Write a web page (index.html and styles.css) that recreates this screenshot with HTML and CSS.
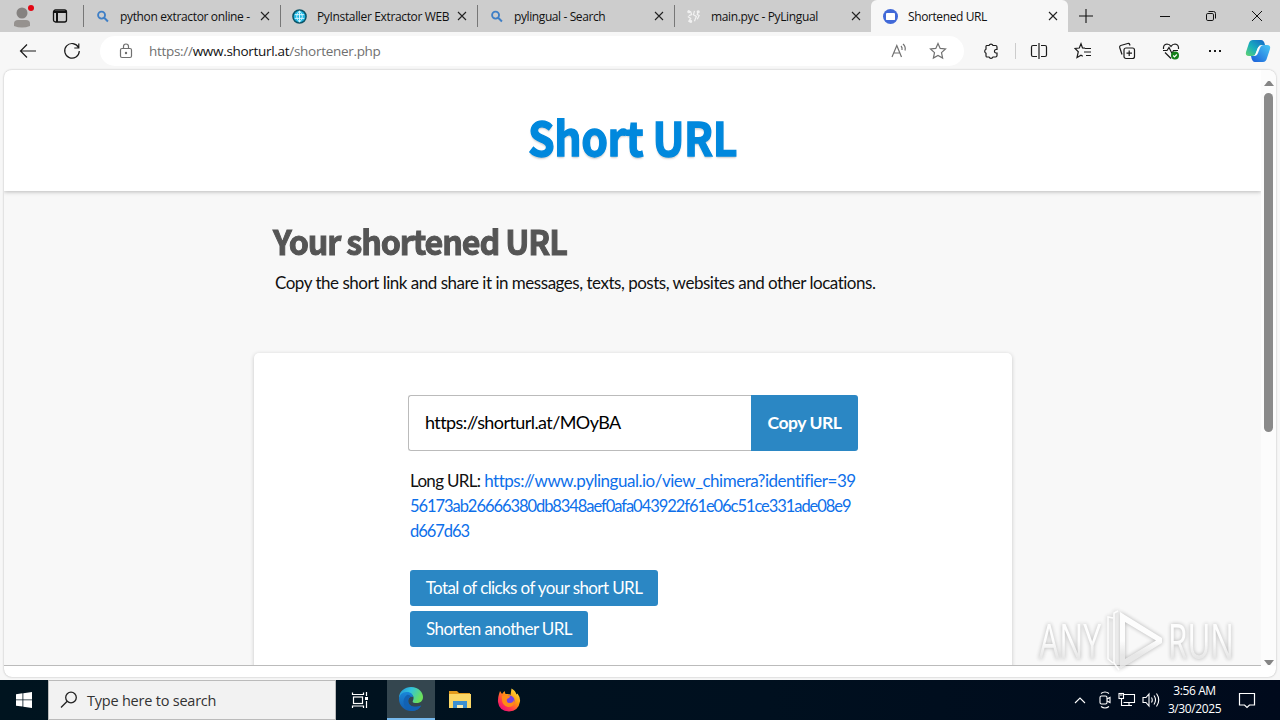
FILE: index.html
```html
<!DOCTYPE html>
<html lang="en">
<head>
  <meta charset="utf-8">
  <title>Shortened URL</title>
  <link rel="stylesheet" href="styles.css">
</head>
<body>
  <div class="desktop">
    <div class="tab-bar">
      <div class="profile">
        <svg width="26" height="28" viewBox="0 0 26 28"><circle cx="12" cy="11" r="5.5" fill="#858280"/><path d="M4 24v-2.500q0-3.500 4-3.500h8q4 0 4 3.500V24q-8 3-16 0z" fill="#96928f"/><circle cx="21" cy="6" r="3" fill="#e30613"/></svg>
      </div>
      <div class="tab-actions">
        <svg width="16" height="16" viewBox="0 0 16 16" fill="none" stroke="#111" stroke-width="1.3"><rect x="1.5" y="2" width="13" height="12" rx="2"/><path d="M1.5 4h13M5 4v10" stroke-width="2"/></svg>
      </div>
      <div class="tab">
        <svg class="favicon" viewBox="0 0 16 16" fill="none" stroke="#3f7fc6" stroke-width="2"><circle cx="7" cy="6.5" r="3.7"/><path d="M9.8 9.3l4 4"/></svg>
        <span class="tab-title t1">python extractor online -</span>
        <svg class="close" viewBox="0 0 10 10"><path d="M1 1l8 8M9 1L1 9"/></svg>
      </div>
      <div class="tab">
        <svg class="favicon" viewBox="0 0 16 16" fill="none"><circle cx="8" cy="8" r="7" fill="#20b7e2" stroke="#0b5367" stroke-width="1.6"/><path d="M3 6h10M3 10h10M8 2v12M8 2q-6 6 0 12M8 2q6 6 0 12" stroke="#d9f6ff"/></svg>
        <span class="tab-title t2">PyInstaller Extractor WEB</span>
        <svg class="close" viewBox="0 0 10 10"><path d="M1 1l8 8M9 1L1 9"/></svg>
      </div>
      <div class="tab">
        <svg class="favicon" viewBox="0 0 16 16" fill="none" stroke="#3f7fc6" stroke-width="2"><circle cx="7" cy="6.5" r="3.7"/><path d="M9.8 9.3l4 4"/></svg>
        <span class="tab-title t3">pylingual - Search</span>
        <svg class="close" viewBox="0 0 10 10"><path d="M1 1l8 8M9 1L1 9"/></svg>
      </div>
      <div class="tab">
        <svg class="favicon" viewBox="0 0 16 16" fill="none" stroke="#f2f2f2" stroke-width="1.3"><path d="M2 2l3 1 1 3-3 1M2 8l3 2-2 3 3 1M9 2l-1 4 3 2-2 5M13 2l-1 4 2 1-2 4"/><circle cx="3" cy="3" r="1"/><circle cx="13" cy="3" r="1"/><circle cx="5" cy="13" r="1"/></svg>
        <span class="tab-title t4">main.pyc - PyLingual</span>
        <svg class="close" viewBox="0 0 10 10"><path d="M1 1l8 8M9 1L1 9"/></svg>
      </div>
      <div class="tab active">
        <svg class="favicon" viewBox="0 0 16 16"><circle cx="8" cy="8" r="8" fill="#4169d8"/><rect x="3.2" y="4.2" width="9.6" height="7.6" rx="1" fill="#fff"/></svg>
        <span class="tab-title t5">Shortened URL</span>
        <svg class="close" viewBox="0 0 10 10"><path d="M1 1l8 8M9 1L1 9"/></svg>
      </div>
      <div class="new-tab">
        <svg width="14" height="14" viewBox="0 0 14 14" stroke="#111" stroke-width="1.1"><path d="M7 0v14M0 7h14"/></svg>
      </div>
      <div class="window-controls">
        <svg width="10" height="10" viewBox="0 0 10 10"><path d="M0 5.5h10"/></svg>
        <svg width="10" height="10" viewBox="0 0 10 10"><rect x=".5" y="2.5" width="7" height="7" rx="1.3"/><path d="M2.5 .5h5q2 0 2 2v5"/></svg>
        <svg width="10" height="10" viewBox="0 0 10 10"><path d="M0 0l10 10M10 0L0 10"/></svg>
      </div>
    </div>

    <div class="toolbar">
      <svg class="back" width="18" height="16" viewBox="0 0 18 16"><path d="M17 8H1.500M8 1.500L1.500 8L8 14.500"/></svg>
      <svg class="reload" width="18" height="18" viewBox="0 0 18 18"><path d="M15.500 5.500A7.300 7.300 0 1 0 16.300 9M15.800 1.500V6h-4.500"/></svg>
      <div class="address">
        <svg class="lock" width="14" height="16" viewBox="0 0 14 16"><rect x="1.500" y="5.500" width="11" height="9" rx="1.500"/><path d="M4.500 5.500V3.500a2.500 2.500 0 0 1 5 0v2"/><circle cx="7" cy="10" r=".6"/></svg>
        <span class="url">https://<b>www.shorturl.at</b>/shortener.php</span>
        <svg class="read" width="16" height="16" viewBox="0 0 16 16"><path d="M1 14L5.800 2.500L10.500 14M2.700 10h6.200M10 3q1.500 1.500 1 4M12 1q3 2.500 2 6.500"/></svg>
        <svg class="fav" width="18" height="18" viewBox="0 0 18 18"><path d="M9 1.500l2.200 4.900 5.300.6-4 3.600 1.100 5.400L9 13.400 4.400 16l1.100-5.400-4-3.600 5.300-.6z"/></svg>
      </div>
      <div class="tools">
        <svg width="18" height="18" viewBox="0 0 18 18"><path d="M4.500 3.500H7a2.200 2.200 0 0 1 4 0h2.500q1.500 0 1.500 1.500v2.500h-1.200a1.800 1.800 0 0 0 0 3.500H15v2.500q0 1.500-1.500 1.500H11a2.200 2.200 0 0 1-4 0H4.500Q4 15 4 13.500V11.200a2.200 2.200 0 0 1 0-4V4.500q0-1 .5-1z"/></svg>
        <span class="divider"></span>
        <svg width="18" height="18" viewBox="0 0 18 18"><path d="M7 3.500H3q-1.500 0-1.500 1.500v8q0 1.500 1.500 1.500h4M11 3.500h4q1.500 0 1.500 1.500v8q0 1.500-1.500 1.500h-4M9 1v16"/></svg>
        <svg width="18" height="18" viewBox="0 0 18 18"><path d="M11 6.200L8.500 6 7 1.800 5.300 6 1 6.500l3.300 3.200L3 15.500l4-2.300 1.800 1M11 6.500h6M10 10h7M12 13.500h5"/></svg>
        <svg width="18" height="18" viewBox="0 0 18 18"><path d="M4 12.500l-2.300-7q-.4-1.500 1-2l7-2q1.500-.4 2 1l.3 1"/><rect x="6" y="6" width="10.500" height="10.500" rx="2"/><path d="M11.200 8.500v5.500M8.500 11.200H14"/></svg>
        <svg width="18" height="18" viewBox="0 0 18 18"><path d="M1.500 7q-.5-4.500 3.500-5Q7.500 2 9 4.300 10.500 2 13 2q4 .5 3.500 5M1 8.500h4L7 5.500l3 6 1.500-3H16M3 10.500l6 6"/><circle cx="13" cy="13.500" r="4" fill="#15801a" stroke="none"/><path d="M11.200 13.500l1.300 1.300 2.300-2.300" stroke="#fff"/></svg>
        <svg width="18" height="18" viewBox="0 0 18 18"><path d="M3 9h2M8 9h2M13 9h2" stroke-width="2"/></svg>
      </div>
      <svg class="copilot" width="26" height="24" viewBox="0 0 26 24">
        <defs>
          <linearGradient id="cpA" x1="0" y1="1" x2="1" y2="0"><stop offset="0" stop-color="#63d46d"/><stop offset=".45" stop-color="#18aebd"/><stop offset="1" stop-color="#1464c9"/></linearGradient>
          <linearGradient id="cpB" x1="1" y1="0" x2="0" y2="1"><stop offset="0" stop-color="#48c9f5"/><stop offset="1" stop-color="#195bd8"/></linearGradient>
        </defs>
        <path d="M8 1h8q3 0 4 5h-4q-2 0-3 3l-2 5q-1 3-4 3H4q-4 0-3-4L4 4q1-3 4-3z" fill="url(#cpA)"/>
        <path d="M18 23h-8q-3 0-4-6h3q3 0 4-3l2-5q1-3 4-3h3q4 0 3 4l-3 9q-1 4-4 4z" fill="url(#cpB)"/>
        <path d="M12.500 9.500q.5-2 2.500-2-1 1-1.500 3l-1.500 4q-.6 2-2.500 2 1-1 1.500-3z" fill="#fff"/>
      </svg>
    </div>

    <div class="frame">
      <div class="viewport">
        <div class="page">
          <div class="site-header"><h1>Short URL</h1></div>
          <div class="intro">
            <h2>Your shortened URL</h2>
            <p>Copy the short link and share it in messages, texts, posts, websites and other locations.</p>
          </div>
          <div class="card">
            <div class="copy-row">
              <div class="short-url"><span>https://shorturl.at/MOyBA</span></div>
              <div class="copy-button"><span>Copy URL</span></div>
            </div>
            <div class="long-url">
              <div class="line"><span class="label">Long URL:</span> <a>https://www.pylingual.io/view_chimera?identifier=39</a></div>
              <div class="line hash"><a>56173ab26666380db8348aef0afa043922f61e06c51ce331ade08e9</a></div>
              <div class="line hash"><a>d667d63</a></div>
            </div>
            <div class="button total"><span>Total of clicks of your short URL</span></div>
            <div class="button another"><span>Shorten another URL</span></div>
          </div>
        </div>
        <div class="scrollbar">
          <svg width="10" height="6" viewBox="0 0 10 6"><path d="M0 6l4-5h2l4 5z" fill="#858585"/></svg>
          <div class="thumb"></div>
          <svg class="down" width="10" height="6" viewBox="0 0 10 6"><path d="M0 0l4 5h2l4-5z" fill="#858585"/></svg>
        </div>
      </div>
    </div>

    <div class="taskbar">
      <div class="start">
        <svg width="16" height="16" viewBox="0 0 16 16" fill="#fff"><path d="M0 2.200L6.500 1.300V7.500H0zM7.300 1.200L16 0v7.500H7.300zM0 8.300h6.500v6.300L0 13.700zM7.300 8.300H16V16l-8.700-1.200z"/></svg>
      </div>
      <div class="search">
        <svg width="18" height="18" viewBox="0 0 18 18" fill="none" stroke="#222" stroke-width="1.300"><circle cx="11" cy="6.500" r="5.300"/><path d="M7.200 10.300L1 16.500"/></svg>
        <span>Type here to search</span>
      </div>
      <div class="task">
        <svg width="18" height="18" viewBox="0 0 18 18" fill="none" stroke="#fff" stroke-width="1.200"><rect x="2.500" y="6" width="9" height="6.500"/><path d="M1.500 1.500v2h11v-2M1.500 17v-2h11v2M15.500 1v4M15.500 10v7"/><path d="M14 7.500h3" stroke-width="3"/></svg>
      </div>
      <div class="task running">
        <svg width="26" height="26" viewBox="0 0 26 26">
          <defs>
            <linearGradient id="edA" x1="0" y1="0" x2="1" y2=".4"><stop offset="0" stop-color="#218fd8"/><stop offset=".5" stop-color="#32c4dc"/><stop offset="1" stop-color="#6be05c"/></linearGradient>
            <linearGradient id="edB" x1="0" y1="0" x2="0" y2="1"><stop offset="0" stop-color="#1986d8"/><stop offset="1" stop-color="#145cad"/></linearGradient>
          </defs>
          <path d="M1 12C1 5 7 1 13 1c8 0 12 6 12 10 0 5-4 6.500-8 6-2 0-3-1.200-2-2.500 2-4-1-7-5-7-5 0-8 3-9 4.500z" fill="url(#edA)"/>
          <path d="M1 13c0-4 4-7.500 8-7 4 0 6 2.500 6.200 5-3-1-5 1-5 4 0 5 6 7.500 13 4.500C20 25 15 25 13 25 6 25 1 19 1 13z" fill="url(#edB)"/>
          <path d="M9 9c-6 4-4 14 4 16 5 0 8-2 10-5-7 2-12 0-12.800-4-.4-3 1-5 3-5-1-2-3-2.500-4.200-2z" fill="#1262b4"/>
        </svg>
      </div>
      <div class="task">
        <svg width="24" height="22" viewBox="0 0 24 22"><path d="M1 2h8l2 2h11v5H1z" fill="#e29b1d"/><path d="M1 5h22v14H1z" fill="#fbd766"/><path d="M5 19v-7h14v7h-4v-3H9v3z" fill="#3c8fd0"/><path d="M9 16h6v3H9z" fill="#f7e9ad"/></svg>
      </div>
      <div class="task">
        <svg width="26" height="26" viewBox="0 0 26 26">
          <defs><linearGradient id="ff" x1="1" y1="0" x2=".2" y2="1"><stop offset="0" stop-color="#fff44f"/><stop offset=".45" stop-color="#ff980e"/><stop offset=".75" stop-color="#ff3750"/><stop offset="1" stop-color="#eb0878"/></linearGradient></defs>
          <path d="M3 7l1-3 2 3 2.500-3 1 3q4-.5 5 1l1-6.500q4 2 5 6l1-1q3 4 2.500 8Q22.500 24 13 24.500 3 24 2 15q-.300-4 1-8z" fill="url(#ff)"/>
          <circle cx="13.500" cy="13.500" r="5" fill="#7542e5"/><path d="M6 9q3-2 5 0h3q0 2-3 3-1 4 3 4 3 0 4-3 1 7-6 7-7-1-6-11z" fill="#ff8b16"/>
        </svg>
      </div>
      <div class="tray">
        <svg width="12" height="8" viewBox="0 0 12 8"><path d="M1 7l5-5 5 5"/></svg>
        <svg width="14" height="18" viewBox="0 0 14 18"><path d="M3 2.500q4-3 8 0M3 15.500q4 3 8 0"/><rect x="2" y="5" width="7" height="8" rx="1.500"/><path d="M9 8l3-1.500v5L9 10"/></svg>
        <svg width="18" height="16" viewBox="0 0 18 16"><path d="M5.500 2.500h11v8h-11M11 10.500v3M7 13.500h7M3.500 6.500v7H7"/><rect x="1" y="1.500" width="4.500" height="5"/><path d="M2 3h2.500"/></svg>
        <svg width="18" height="16" viewBox="0 0 18 16"><path d="M1 5.500h3l3-3.500v12l-3-3.500H1zM9.500 5.500q1.500 2.500 0 5M12 3.500q3 4.500 0 9M14.500 1.500q4.500 6.500 0 13"/></svg>
      </div>
      <div class="clock"><span class="time">3:56 AM</span><span class="date">3/30/2025</span></div>
      <div class="notify">
        <svg width="18" height="18" viewBox="0 0 18 18" fill="none" stroke="#fff" stroke-width="1.200"><path d="M1.500 2.500h15v11.500h-5L9 16.500 6.500 14h-5z"/></svg>
      </div>
    </div>

    <svg class="watermark" width="230" height="72" viewBox="0 0 230 72">
      <defs><linearGradient id="wm" x1="0" y1="0" x2="0" y2="1"><stop offset=".5" stop-color="#fff"/><stop offset=".75" stop-color="#e4e4e4"/></linearGradient></defs>
      <g class="mark-text" fill="url(#wm)">
        <text x="5" y="55" textLength="62" lengthAdjust="spacingAndGlyphs">ANY</text>
        <text x="134" y="55" textLength="66" lengthAdjust="spacingAndGlyphs">RUN</text>
      </g>
      <g class="mark-shape">
        <path d="M86 8l42 26v5L86 65zM91 18v37l31-18.500z" fill="url(#wm)" fill-rule="evenodd"/>
        <path d="M84 7l-4 2v50l5 7M79 14l-5-1v42l5 4" fill="none" stroke="#fff" stroke-width="1.500"/>
      </g>
    </svg>
  </div>
</body>
</html>
```
FILE: styles.css
```css
* {
  box-sizing: border-box;
}
body {
  margin: 0;
  font-family: "Open Sans", "Noto Sans", sans-serif;
  color: #111;
}
svg {
  display: block;
  flex: none;
}
h1, h2, p {
  margin: 0;
}
.desktop {
  position: relative;
  display: flex;
  flex-direction: column;
  width: 1280px;
  height: 720px;
  overflow: hidden;
  background: #f7f7f7;
  white-space: nowrap;
}

/* tabs */
.tab-bar {
  display: flex;
  height: 32px;
  background: #cdcdcd;
}
.profile {
  width: 46px;
  padding: 2px 0 0 10px;
}
.tab-actions {
  width: 37px;
  padding: 8px 0 0 6px;
}
.tab {
  display: flex;
  align-items: center;
  width: 197px;
  padding: 0 10px 0 11px;
  border-left: 1px solid #777;
  border-image: linear-gradient(#cdcdcd 6px, #777 6px, #777 26px, #cdcdcd 26px) 1;
  border-width: 0 0 0 1px;
}
.favicon {
  width: 15px;
  height: 15px;
  margin-right: 10px;
}
.tab-title {
  flex: 1;
  font-size: 12px;
  letter-spacing: -0.35px;
}
.t3, .t5 {
  letter-spacing: -0.4px;
}
.close {
  width: 10px;
  height: 10px;
  stroke: #222;
  stroke-width: 1.1;
}
.tab.active {
  background: #f7f7f7;
  border: 0;
  padding-left: 12px;
  border-radius: 6px 6px 0 0;
}
.new-tab {
  width: 44px;
  padding: 9px 0 0 11px;
}
.window-controls {
  flex: 1;
  display: flex;
  align-items: center;
  justify-content: space-between;
  padding: 0 18px 0 48px;
  fill: none;
  stroke: #111;
}

/* address bar */
.toolbar {
  display: flex;
  align-items: center;
  height: 38px;
  padding-left: 19px;
  fill: none;
  stroke: #1b1b1b;
  stroke-width: 1.2;
}
.reload {
  margin-left: 26px;
}
.address {
  display: flex;
  align-items: center;
  width: 864px;
  height: 30px;
  margin-left: 19px;
  padding: 0 17px 0 19px;
  border-radius: 15px;
  background: #fff;
  stroke: #707070;
}
.url {
  flex: 1;
  margin-left: 16px;
  font-size: 13.5px;
  letter-spacing: -0.3px;
  color: #707070;
}
.url b {
  font-weight: 400;
  color: #111;
}
.fav {
  margin-left: 22px;
}
.tools {
  display: flex;
  align-items: center;
  width: 243px;
  margin-left: 18px;
  gap: 26px;
}
.divider {
  flex: none;
  width: 1px;
  height: 16px;
  margin: 0 -12px 0 -11px;
  background: #ccc;
}
.copilot {
  stroke: none;
  margin-left: 20px;
}

/* browser frame */
.frame {
  height: 607px;
  margin: 0 4px;
  border-radius: 8px;
  background: #fff;
  box-shadow: 0 0 2px #aaa;
  overflow: hidden;
}
.viewport {
  display: flex;
  height: 596px;
}
.page {
  width: 1257px;
  height: 596px;
  overflow: hidden;
  background: #f8f8f8;
  border-bottom: 1px solid #bbb;
}
.scrollbar {
  width: 15px;
  display: flex;
  flex-direction: column;
  align-items: center;
  padding: 10px 0 0;
  background: #fcfcfc;
}
.thumb {
  width: 9px;
  height: 340px;
  margin-top: 7px;
  border-radius: 5px;
  background: #8a8a8a;
}
.down {
  margin-top: 228px;
}

/* site */
.site-header {
  height: 121px;
  background: #fff;
  box-shadow: 0 1px 4px rgba(0,0,0,0.25);
  text-align: center;
}
h1 {
  padding-top: 31px;
  font: 700 46px/70px "Noto Sans CJK SC", sans-serif;
  color: #0088dd;
  letter-spacing: -0.5px;
  text-shadow: 0 2px 2px rgba(0,0,0,0.2);
  -webkit-text-stroke: 1.3px #0088dd;
  transform: scaleX(0.93);
}
.intro {
  height: 162px;
  padding: 27px 0 0 269px;
}
h2 {
  font: 700 34px/46px "Noto Sans CJK SC", sans-serif;
  color: #555;
  letter-spacing: -1.2px;
  -webkit-text-stroke: 1px #555;
  transform: scaleX(0.95);
  transform-origin: 0 0;
}
.intro p {
  margin: 7px 0 0 2px;
  font: 17px/24px Lato, sans-serif;
  letter-spacing: -0.48px;
}
.card {
  width: 758px;
  height: 340px;
  margin-left: 250px;
  padding: 42px 0 0 154px;
  border-radius: 5px;
  background: #fff;
  box-shadow: 0 1px 4px rgba(0,0,0,0.2);
  font-family: Lato, sans-serif;
}
.copy-row {
  display: flex;
  width: 450px;
  height: 56px;
}
.short-url {
  width: 343px;
  padding-left: 16px;
  border: 1px solid #bbb;
  border-right: 0;
  border-radius: 3px 0 0 3px;
  font-size: 18px;
  letter-spacing: -0.58px;
  line-height: 53px;
  color: #000;
}
.copy-button {
  width: 107px;
  border-radius: 0 3px 3px 0;
  background: #2b87c4;
  color: #fff;
  font-size: 17.5px;
  font-weight: 700;
  letter-spacing: -0.45px;
  line-height: 56px;
  text-align: center;
}
.long-url {
  margin: 17px 0 25px 2px;
  font-size: 17px;
  letter-spacing: -0.48px;
  line-height: 25.5px;
}
.long-url a {
  color: #0d6fea;
}
.label {
  letter-spacing: -0.7px;
}
.hash {
  font-size: 16.5px;
  letter-spacing: -1.06px;
}
.button {
  height: 36px;
  margin: 0 0 5px 2px;
  border-radius: 3px;
  background: #2b87c4;
  color: #fff;
  font-size: 17px;
  letter-spacing: -0.6px;
  line-height: 35px;
  text-align: center;
}
.total {
  width: 248px;
}
.another {
  width: 178px;
}

/* taskbar */
.taskbar {
  display: flex;
  height: 40px;
  margin-top: 3px;
  background: linear-gradient(90deg, #00141f, #00101f 60%, #000a1c);
  color: #fff;
}
.start {
  width: 48px;
  padding: 12px 16px;
}
.search {
  display: flex;
  align-items: center;
  width: 288px;
  padding-left: 11px;
  border: 1px solid #bbb;
  background: #f2f2f2;
  color: #333;
  font-size: 14.5px;
  letter-spacing: -0.22px;
}
.search span {
  margin-left: 9px;
}
.task {
  display: flex;
  align-items: center;
  justify-content: center;
  width: 48px;
  margin-right: 1px;
}
.running {
  background: #34464f;
  border-bottom: 2px solid #76b9ed;
  margin-left: 2px;
}
.tray {
  display: flex;
  align-items: center;
  gap: 6px;
  margin: 0 0 0 auto;
  fill: none;
  stroke: #fff;
  stroke-width: 1.1;
}
.tray svg:first-child {
  margin-right: 6px;
}
.clock {
  display: flex;
  flex-direction: column;
  align-items: center;
  width: 69px;
  padding-top: 2px;
  font-size: 12px;
  line-height: 18px;
  letter-spacing: -0.4px;
}
.notify {
  width: 51px;
  padding: 11px 0 0 9px;
}

.watermark {
  position: absolute;
  left: 1034px;
  top: 604px;
  overflow: visible;
  filter: drop-shadow(0 0 2px rgba(0,0,0,0.35));
  opacity: 0.8;
}
.mark-text {
  font: 50px "Open Sans", sans-serif;
}
```
